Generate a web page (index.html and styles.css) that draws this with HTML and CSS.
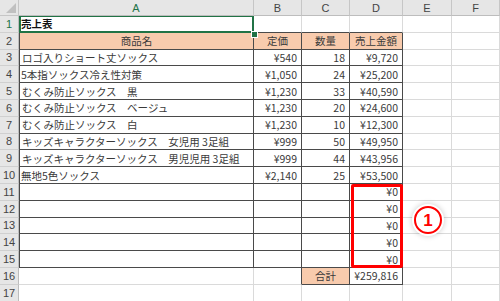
FILE: index.html
```html
<!DOCTYPE html>
<html lang="ja">
<head>
<meta charset="utf-8">
<link rel="stylesheet" href="styles.css">
</head>
<body>
<div class="sheet">
  <div class="grid">
    <div class="corner"></div>
    <div class="ch sel">A</div><div class="ch">B</div><div class="ch">C</div><div class="ch">D</div><div class="ch">E</div><div class="ch">F</div>

    <div class="rh sel">1</div>
    <div class="c a1 bold">売上表</div><div class="c tb"></div><div class="c tb"></div><div class="c tb"></div><div class="c"></div><div class="c"></div>

    <div class="rh">2</div>
    <div class="c t tl hd ctr">商品名</div><div class="c t hd ctr">定価</div><div class="c t hd ctr">数量</div><div class="c t hd ctr">売上金額</div><div class="c"></div><div class="c"></div>

    <div class="rh">3</div>
    <div class="c t tl">ロゴ入りショート丈ソックス</div><div class="c t r">¥540</div><div class="c t r">18</div><div class="c t r">¥9,720</div><div class="c"></div><div class="c"></div>

    <div class="rh">4</div>
    <div class="c t tl nopad">5本指ソックス冷え性対策</div><div class="c t r">¥1,050</div><div class="c t r">24</div><div class="c t r">¥25,200</div><div class="c"></div><div class="c"></div>

    <div class="rh">5</div>
    <div class="c t tl">むくみ防止ソックス　黒</div><div class="c t r">¥1,230</div><div class="c t r">33</div><div class="c t r">¥40,590</div><div class="c"></div><div class="c"></div>

    <div class="rh">6</div>
    <div class="c t tl">むくみ防止ソックス　ベージュ</div><div class="c t r">¥1,230</div><div class="c t r">20</div><div class="c t r">¥24,600</div><div class="c"></div><div class="c"></div>

    <div class="rh">7</div>
    <div class="c t tl">むくみ防止ソックス　白</div><div class="c t r">¥1,230</div><div class="c t r">10</div><div class="c t r">¥12,300</div><div class="c"></div><div class="c"></div>

    <div class="rh">8</div>
    <div class="c t tl">キッズキャラクターソックス　女児用 3足組</div><div class="c t r">¥999</div><div class="c t r">50</div><div class="c t r">¥49,950</div><div class="c"></div><div class="c"></div>

    <div class="rh">9</div>
    <div class="c t tl">キッズキャラクターソックス　男児児用 3足組</div><div class="c t r">¥999</div><div class="c t r">44</div><div class="c t r">¥43,956</div><div class="c"></div><div class="c"></div>

    <div class="rh">10</div>
    <div class="c t tl nopad">無地5色ソックス</div><div class="c t r">¥2,140</div><div class="c t r">25</div><div class="c t r">¥53,500</div><div class="c"></div><div class="c"></div>

    <div class="rh">11</div>
    <div class="c t tl"></div><div class="c t"></div><div class="c t"></div><div class="c t r">¥0</div><div class="c"></div><div class="c"></div>

    <div class="rh">12</div>
    <div class="c t tl"></div><div class="c t"></div><div class="c t"></div><div class="c t r">¥0</div><div class="c"></div><div class="c"></div>

    <div class="rh">13</div>
    <div class="c t tl"></div><div class="c t"></div><div class="c t"></div><div class="c t r">¥0</div><div class="c"></div><div class="c"></div>

    <div class="rh">14</div>
    <div class="c t tl"></div><div class="c t"></div><div class="c t"></div><div class="c t r">¥0</div><div class="c"></div><div class="c"></div>

    <div class="rh">15</div>
    <div class="c t tl"></div><div class="c t"></div><div class="c t"></div><div class="c t r">¥0</div><div class="c"></div><div class="c"></div>

    <div class="rh">16</div>
    <div class="c"></div><div class="c tr"></div><div class="c t hd ctr">合計</div><div class="c t r">¥259,816</div><div class="c"></div><div class="c"></div>

    <div class="rh">17</div>
    <div class="c"></div><div class="c"></div><div class="c"></div><div class="c"></div><div class="c"></div><div class="c"></div>
  </div>
  <div class="handle"></div>
  <div class="redbox"></div>
  <div class="badge">1</div>
</div>
</body>
</html>
```
FILE: styles.css
```css
html, body {
  margin: 0;
  padding: 0;
  background: #ffffff;
}
body {
  font-family: "Noto Sans CJK JP", "Noto Sans", sans-serif;
  font-size: 10.5px;
  color: #3a3a3a;
}
.sheet {
  position: relative;
  width: 500px;
  height: 301px;
  overflow: hidden;
}
.grid {
  display: grid;
  grid-template-columns: 19px 235px 48px 48px 53px 49px 48px;
  grid-template-rows: 16px repeat(17, 16.8px);
}
.corner {
  background: #e6e6e6;
  border-right: 1px solid #c6c6c6;
  border-bottom: 1px solid #c6c6c6;
  position: relative;
}
.corner::after {
  content: "";
  position: absolute;
  right: 2px;
  bottom: 2px;
  width: 0;
  height: 0;
  border-left: 10px solid transparent;
  border-bottom: 10px solid #c0c0c0;
}
.ch {
  background: #e6e6e6;
  border-right: 1px solid #c6c6c6;
  border-bottom: 1px solid #bdbdbd;
  display: flex;
  align-items: center;
  justify-content: center;
  font-family: "Liberation Sans", "Noto Sans", sans-serif;
  font-size: 11px;
  color: #444444;
}
.rh {
  background: #e6e6e6;
  border-right: 1px solid #bdbdbd;
  border-bottom: 1px solid #d0d0d0;
  display: flex;
  align-items: center;
  justify-content: center;
  font-family: "Liberation Sans", "Noto Sans", sans-serif;
  font-size: 11px;
  color: #444444;
}
.ch.sel, .rh.sel {
  color: #217346;
}
.c {
  border-right: 1px solid #dadada;
  border-bottom: 1px solid #dadada;
  display: flex;
  align-items: center;
  padding: 0 2px;
  white-space: nowrap;
  overflow: visible;
  min-width: 0;
}
.nopad {
  padding-left: 1px;
}
.bold {
  font-weight: bold;
  color: #111111;
}
.a1 {
  box-shadow: inset 0 0 0 1px #217346;
  border-color: #217346;
  border-left: 1px solid #217346;
  padding-left: 1px;
}
.tb {
  border-bottom-color: #4a4a4a;
}
.tr {
  border-right-color: #4a4a4a;
}
.t {
  border-right-color: #4a4a4a;
  border-bottom-color: #4a4a4a;
}
.tl {
  border-left: 1px solid #4a4a4a;
}
.hd {
  background: #f8cbad;
}
.ctr {
  justify-content: center;
}
.r {
  justify-content: flex-end;
  padding-right: 4px;
}
.handle {
  position: absolute;
  left: 251px;
  top: 31px;
  width: 5px;
  height: 5px;
  background: #217346;
  border: 1px solid #ffffff;
}
.redbox {
  position: absolute;
  left: 351px;
  top: 184px;
  width: 52px;
  height: 84px;
  box-sizing: border-box;
  border: 3px solid #ff0000;
  border-radius: 2px;
}
.badge {
  position: absolute;
  left: 414px;
  top: 206px;
  width: 28px;
  height: 28px;
  box-sizing: border-box;
  border: 2.5px solid #ff0000;
  border-radius: 50%;
  background: #ffffff;
  box-shadow: 0 0 0 2px #ffffff, 0 0 5px 3px rgba(0, 0, 0, 0.15);
  display: flex;
  align-items: center;
  justify-content: center;
  color: #ff0000;
  font-family: "Liberation Sans", "Noto Sans", sans-serif;
  font-weight: bold;
  font-size: 17px;
  line-height: 1;
}
```
